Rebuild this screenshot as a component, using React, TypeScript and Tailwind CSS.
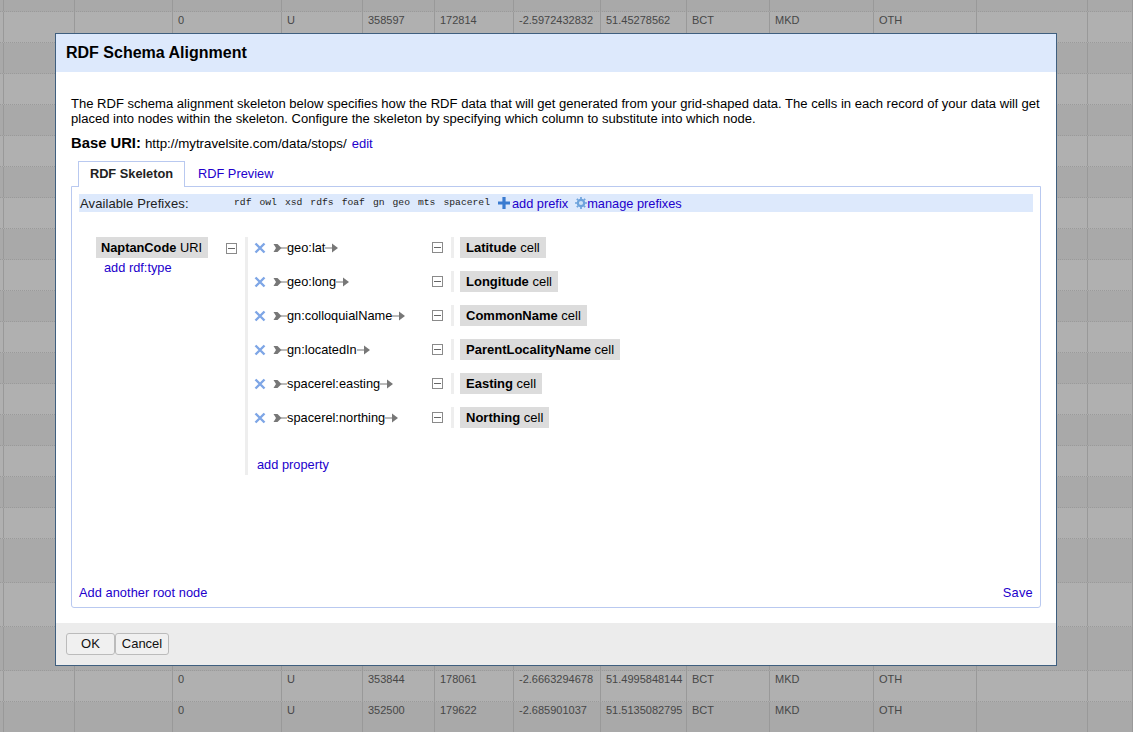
const sans = "font-['Liberation_Sans',Arial,sans-serif]";
const COLS = [4, 71, 98, 109, 81, 72, 79, 87, 86, 83, 104, 103, 111, 45];
const H = [12,31,31,31,31,31,31,31,31,31,31,31,31,31,31,31,31,31,44,44,44,31,31];
const TEXT: Record<number, string[]> = {
  1: ["", "", "", "0", "U", "358597", "172814", "-2.5972432832", "51.45278562", "BCT", "MKD", "OTH", "", ""],
  21: ["", "", "", "0", "U", "353844", "178061", "-2.6663294678", "51.4995848144", "BCT", "MKD", "OTH", "", ""],
  22: ["", "", "", "0", "U", "352500", "179622", "-2.685901037", "51.5135082795", "BCT", "MKD", "OTH", "", ""],
};

function Grid() {
  return (
    <div className="w-[1133px] h-[732px] overflow-hidden">
      {H.map((h, i) => (
        <div key={i} style={{ height: h }} className={`flex border-b border-dotted border-[#9a9a9a] ${i % 2 === 1 ? "bg-[#b0b0b0]" : "bg-[#a9a9a9]"}`}>
          {COLS.map((w, c) => (
            <div key={c} style={{ width: w }} className="shrink-0 border-r border-[#999999] pt-[2px] text-[11px] leading-[13px] text-[#474747] whitespace-nowrap overflow-hidden">
              {TEXT[i]?.[c] ? <span className="ml-[5px]">{TEXT[i][c]}</span> : null}
            </div>
          ))}
        </div>
      ))}
    </div>
  );
}

function Toggle() {
  return (
    <svg width="11" height="11" viewBox="0 0 11 11" className="block shrink-0">
      <rect x="0.5" y="0.5" width="10" height="10" fill="#fff" stroke="#8a8a8a" />
      <path d="M2 5.5H9" stroke="#666" strokeWidth="1" />
    </svg>
  );
}

function Remove() {
  return (
    <svg width="12" height="12" viewBox="0 0 12 12" className="block shrink-0">
      <path d="M1.5 1.5L10.5 10.5M10.5 1.5L1.5 10.5" stroke="#7ea6e6" strokeWidth="2.4" />
    </svg>
  );
}

function ArrowStart() {
  return (
    <svg width="14" height="10" viewBox="0 0 14 10" className="block shrink-0">
      <path d="M0.5 1L4.5 1L8.5 5L4.5 9L0.5 9L3 5Z" fill="#777" />
      <path d="M8 5H14" stroke="#777" strokeWidth="1" />
    </svg>
  );
}

function ArrowEnd() {
  return (
    <svg width="13" height="10" viewBox="0 0 13 10" className="block shrink-0">
      <path d="M0 5H8" stroke="#777" strokeWidth="1" />
      <path d="M7 0.5L13 5L7 9.5Z" fill="#777" />
    </svg>
  );
}

function Plus() {
  return (
    <svg width="12" height="12" viewBox="0 0 12 12" className="block shrink-0">
      <path d="M6 0V12M0 6H12" stroke="#3a7bd0" strokeWidth="3.2" />
    </svg>
  );
}

function Gear() {
  return (
    <svg width="12" height="12" viewBox="0 0 12 12" className="block shrink-0">
      <circle cx="6" cy="6" r="3.2" fill="#cfe2f6" stroke="#6ea3dc" strokeWidth="2.2" />
      <path d="M6 0V2M6 10V12M0 6H2M10 6H12M1.8 1.8L3.2 3.2M8.8 8.8L10.2 10.2M1.8 10.2L3.2 8.8M8.8 3.2L10.2 1.8" stroke="#6ea3dc" strokeWidth="1.7" />
    </svg>
  );
}

const PROPS = [
  ["geo:lat", "Latitude"],
  ["geo:long", "Longitude"],
  ["gn:colloquialName", "CommonName"],
  ["gn:locatedIn", "ParentLocalityName"],
  ["spacerel:easting", "Easting"],
  ["spacerel:northing", "Northing"],
];
const PREFIXES = ["rdf", "owl", "xsd", "rdfs", "foaf", "gn", "geo", "mts", "spacerel"];
const link = "text-[#2200cc]";

export default function App() {
  return (
    <div className={`relative w-[1133px] h-[732px] overflow-hidden ${sans}`}>
      <Grid />
      <div className="absolute left-[55px] top-[33px] w-[1002px] h-[633px] flex flex-col border border-[#3f5f7f] bg-white text-black">
        <div className="h-[38px] shrink-0 bg-[#dde9fc] pl-[10px] pt-[9px] text-[16px] leading-[19px] font-bold">RDF Schema Alignment</div>
        <div className="flex-1 flex flex-col pl-[15px] pr-[15px] text-[12.8px]">
          <p className="mt-[24px] w-[975px] text-[13.05px] leading-[15px]">
            The RDF schema alignment skeleton below specifies how the RDF data that will get generated from your grid-shaped data. The cells in each record of your data will get placed into nodes within the skeleton. Configure the skeleton by specifying which column to substitute into which node.
          </p>
          <div className="mt-[9px] flex items-baseline h-[17px] leading-[17px] text-[13px]">
            <span className="text-[14.8px] font-bold mr-[4px]">Base URI:</span>
            <span className="text-[13.3px]">http://mytravelsite.com/data/stops/</span>
            <span className={`ml-[5px] ${link}`}>edit</span>
          </div>
          <div className="mt-[9px] flex pl-[7px] h-[26px] relative z-10">
            <div className="w-[107px] h-[26px] border border-b-0 border-[#b9c9f0] bg-white text-center leading-[24px] font-bold text-[#222]">RDF Skeleton</div>
            <div className={`pl-[13px] leading-[26px] ${link}`}>RDF Preview</div>
          </div>
          <div className="-mt-px h-[422px] w-[970px] flex flex-col border border-[#b9c9f0] rounded-b-[3px] px-[7px] pt-[7px] pb-[7px]">
            <div className="h-[18px] shrink-0 flex items-center bg-[#dde9fc] pl-px">
              <span className="w-[154px] pt-px text-[13px] tracking-[0.1px] text-[#222]">Available Prefixes:</span>
              <div className="flex gap-[8px] font-['Liberation_Mono',monospace] text-[9.7px] text-[#222]">
                {PREFIXES.map((p) => <span key={p}>{p}</span>)}
              </div>
              <span className="ml-[8px]"><Plus /></span>
              <span className={`ml-[2px] pt-px ${link}`}>add prefix</span>
              <span className="ml-[7px]"><Gear /></span>
              <span className={`pt-px ${link}`}>manage prefixes</span>
            </div>
            <div className="flex-1 mt-[25px] flex">
              <div className="ml-[17px] w-[112px] shrink-0">
                <div className="h-[21px] bg-[#dcdcdc] pl-[5px] leading-[21px] whitespace-nowrap"><b>NaptanCode</b> URI</div>
                <div className={`pl-[8px] pt-[2px] leading-[15px] ${link}`}>add rdf:type</div>
              </div>
              <div className="ml-[18px] mt-[6px] shrink-0 self-start"><Toggle /></div>
              <div className="ml-[8px] w-[3px] h-[238px] shrink-0 bg-[#eeeeee]" />
              <div className="ml-[6px] flex flex-col gap-[13px]">
                {PROPS.map(([p, c]) => (
                  <div key={p} className="h-[21px] flex items-center">
                    <div className="w-[178px] flex items-center shrink-0 pt-px">
                      <Remove />
                      <span className="w-[7px]" />
                      <ArrowStart />
                      <span>{p}</span>
                      <ArrowEnd />
                    </div>
                    <Toggle />
                    <span className="ml-[8px] w-[3px] h-[21px] bg-[#eeeeee]" />
                    <span className="ml-[6px] h-[21px] bg-[#dcdcdc] px-[6px] text-[13px] leading-[21px] whitespace-nowrap"><b>{c}</b> cell</span>
                  </div>
                ))}
                <div className={`pl-[3px] mt-[16px] leading-[15px] ${link}`}>add property</div>
              </div>
            </div>
            <div className="flex justify-between leading-[15px]">
              <span className={`tracking-[0.05px] ${link}`}>Add another root node</span>
              <span className={`tracking-[0.3px] ${link}`}>Save</span>
            </div>
          </div>
        </div>
        <div className="h-[42px] shrink-0 bg-[#ececec] pl-[10px] pt-[10px] flex items-start text-[13px]">
          <button className="w-[49px] h-[22px] border border-[#bbbbbb] rounded-[3px] bg-[#f0f0f0] text-[#111]">OK</button>
          <button className="w-[54px] h-[22px] border border-[#bbbbbb] rounded-[3px] bg-[#f0f0f0] text-[#111]">Cancel</button>
        </div>
      </div>
    </div>
  );
}
